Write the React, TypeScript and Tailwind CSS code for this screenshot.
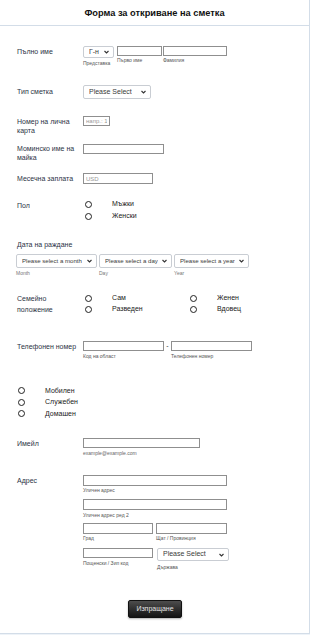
import React from 'react';

const font = { fontFamily: '"Liberation Sans", Arial, sans-serif' };

function Chevron() {
  return (
    <svg width="5" height="4" viewBox="0 0 10 7" className="shrink-0">
      <path d="M1 1.5 L5 5.5 L9 1.5" fill="none" stroke="#333" strokeWidth="2.2" />
    </svg>
  );
}

function FakeSelect({ text, className }: { text: string; className: string }) {
  return (
    <div
      className={`flex items-center justify-between bg-white border border-[#c9cdd3] rounded-[2px] pl-[5px] pr-[4px] text-[#3a3a3a] ${className}`}
    >
      <span className="truncate">{text}</span>
      <Chevron />
    </div>
  );
}

function TextBox({ className, placeholder }: { className: string; placeholder?: string }) {
  return (
    <input
      placeholder={placeholder}
      className={`block bg-white border border-[#8f8f8f] px-[2px] text-[6px] text-[#333] placeholder:text-[#999] outline-none ${className}`}
    />
  );
}

function Radio() {
  return <span className="block w-[7px] h-[7px] rounded-full border-[1.3px] border-[#222] bg-white shrink-0" />;
}

function Sub({ children, className = '' }: { children: React.ReactNode; className?: string }) {
  return <div className={`text-[5px] leading-[7px] text-[#555] whitespace-nowrap ${className}`}>{children}</div>;
}

function Label({ children, className = '' }: { children: React.ReactNode; className?: string }) {
  return <div className={`w-[66px] shrink-0 text-[7px] leading-[9px] text-[#2c3345] ${className}`}>{children}</div>;
}

function RadioItem({ text, gap }: { text: string; gap: string }) {
  return (
    <div className={`flex items-center h-full ${gap}`}>
      <Radio />
      <span className="text-[7px] text-[#222]">{text}</span>
    </div>
  );
}

export default function App() {
  return (
    <div className="min-h-screen bg-[#eef3f8]" style={font}>
      <div className="w-[310px] h-[634px] bg-white border-r border-b border-[#d3dde8]">
        <div className="h-[26px] border-b border-[#d3dde8] flex items-center justify-center">
          <h1 className="text-[9.25px] font-bold text-[#111] mt-[2px]">Форма за откриване на сметка</h1>
        </div>

        <div className="pt-[18px] pl-[17px]">
          {/* Full name */}
          <div className="h-[39px] flex pt-[2px]">
            <Label className="pt-[1px]">Пълно име</Label>
            <div className="flex items-start">
              <div className="flex flex-col w-[31px] mr-[3px]">
                <FakeSelect text="Г-н" className="h-[12px] w-[31px] text-[7px]" />
                <Sub className="mt-[2px]">Представка</Sub>
              </div>
              <div className="flex flex-col mr-[1px]">
                <TextBox className="h-[10px] w-[45px]" />
                <Sub className="mt-[1px]">Първо име</Sub>
              </div>
              <div className="flex flex-col">
                <TextBox className="h-[10px] w-[64px]" />
                <Sub className="mt-[1px]">Фамилия</Sub>
              </div>
            </div>
          </div>

          {/* Account type */}
          <div className="h-[31px] flex items-start pt-[2px]">
            <Label className="pt-[2px]">Тип сметка</Label>
            <FakeSelect text="Please Select" className="h-[14px] w-[68px] text-[7px]" />
          </div>

          {/* ID */}
          <div className="h-[28px] flex items-start pt-[2px]">
            <Label className="leading-[8px] pt-[1px]">Номер на лична карта</Label>
            <TextBox className="h-[10px] w-[27px]" placeholder="напр.: 1234" />
          </div>

          {/* Mother's maiden name */}
          <div className="h-[29px] flex items-start pt-[2px]">
            <Label>Моминско име на майка</Label>
            <TextBox className="h-[10px] w-[81px]" />
          </div>

          {/* Salary */}
          <div className="h-[27px] flex items-start pt-[2px]">
            <Label className="pt-[1px]">Месечна заплата</Label>
            <TextBox className="h-[11px] w-[70px]" placeholder="USD" />
          </div>

          {/* Gender */}
          <div className="h-[42px] flex items-start">
            <Label className="pt-[3px]">Пол</Label>
            <div className="flex flex-col pl-[2px]">
              <div className="h-[12px]"><RadioItem text="Мъжки" gap="gap-[20px]" /></div>
              <div className="h-[12px]"><RadioItem text="Женски" gap="gap-[20px]" /></div>
            </div>
          </div>

          {/* Birth date */}
          <div className="h-[10px] text-[7px] leading-[10px] text-[#2c3345]">Дата на раждане</div>
          <div className="h-[42px] flex items-start pt-[4px] -ml-[1px]">
            <div className="flex flex-col mr-[2px]">
              <FakeSelect text="Please select a month" className="h-[14px] w-[81px] text-[6.1px]" />
              <Sub className="mt-[2px] text-[#777]">Month</Sub>
            </div>
            <div className="flex flex-col mr-[2px]">
              <FakeSelect text="Please select a day" className="h-[14px] w-[73px] text-[6.1px]" />
              <Sub className="mt-[2px] text-[#777]">Day</Sub>
            </div>
            <div className="flex flex-col">
              <FakeSelect text="Please select a year" className="h-[14px] w-[75px] text-[6.1px]" />
              <Sub className="mt-[2px] text-[#777]">Year</Sub>
            </div>
          </div>

          {/* Marital status */}
          <div className="h-[44px] flex items-start pt-[1px]">
            <Label className="leading-[11px]">Семейно положение</Label>
            <div className="grid grid-cols-[105px_auto] content-start pl-[2px]">
              <div className="h-[11px]"><RadioItem text="Сам" gap="gap-[20px]" /></div>
              <div className="h-[11px]"><RadioItem text="Женен" gap="gap-[20px]" /></div>
              <div className="h-[11px]"><RadioItem text="Разведен" gap="gap-[20px]" /></div>
              <div className="h-[11px]"><RadioItem text="Вдовец" gap="gap-[20px]" /></div>
            </div>
          </div>

          {/* Phone */}
          <div className="h-[46px] flex items-start pt-[5px]">
            <Label className="pt-[1px]">Телефонен номер</Label>
            <div className="flex">
              <div className="flex flex-col">
                <TextBox className="h-[10px] w-[81px]" />
                <Sub className="mt-[2px]">Код на област</Sub>
              </div>
              <span className="w-[7px] text-center text-[7px] leading-[10px] text-[#333]">-</span>
              <div className="flex flex-col">
                <TextBox className="h-[10px] w-[81px]" />
                <Sub className="mt-[2px]">Телефонен номер</Sub>
              </div>
            </div>
          </div>

          {/* Phone type */}
          <div className="h-[50px] flex flex-col pt-[3px] pl-[1px]">
            <div className="h-[11.5px]"><RadioItem text="Мобилен" gap="gap-[20px]" /></div>
            <div className="h-[11.5px]"><RadioItem text="Служебен" gap="gap-[20px]" /></div>
            <div className="h-[11.5px]"><RadioItem text="Домашен" gap="gap-[20px]" /></div>
          </div>

          {/* Email */}
          <div className="h-[38px] flex items-start pt-[6px]">
            <Label className="pt-[1px]">Имейл</Label>
            <div className="flex flex-col">
              <TextBox className="h-[10px] w-[117px]" />
              <Sub className="mt-[2px] text-[5.5px] text-[#666]">example@example.com</Sub>
            </div>
          </div>

          {/* Address */}
          <div className="h-[125px] flex items-start pt-[5px]">
            <Label className="pt-[1px]">Адрес</Label>
            <div className="flex flex-col">
              <TextBox className="h-[11px] w-[144px]" />
              <Sub className="mt-[1px]">Уличен адрес</Sub>
              <TextBox className="h-[11px] w-[144px] mt-[5px]" />
              <Sub className="mt-[2px]">Уличен адрес ред 2</Sub>
              <div className="flex items-start gap-[3px] mt-[4px]">
                <div className="flex flex-col">
                  <TextBox className="h-[11px] w-[70px]" />
                  <Sub className="mt-[1px]">Град</Sub>
                </div>
                <div className="flex flex-col">
                  <TextBox className="h-[11px] w-[71px]" />
                  <Sub className="mt-[1px]">Щат / Провинция</Sub>
                </div>
              </div>
              <div className="flex items-start gap-[4px] mt-[6px]">
                <div className="flex flex-col">
                  <TextBox className="h-[10px] w-[70px]" />
                  <Sub className="mt-[2px]">Пощенски / Зип код</Sub>
                </div>
                <div className="flex flex-col">
                  <FakeSelect text="Please Select" className="h-[13px] w-[72px] text-[7px]" />
                  <Sub className="mt-[3px]">Държава</Sub>
                </div>
              </div>
            </div>
          </div>

          {/* Submit */}
          <div className="flex pl-[111px] pt-[5px]">
            <button className="w-[54px] h-[18px] rounded-[2px] border border-[#111] bg-gradient-to-b from-[#4d4d4d] to-[#141414] text-[7px] text-[#e6e6e6] shadow-[0_1px_2px_rgba(0,0,0,0.3)]">
              Изпращане
            </button>
          </div>
        </div>
      </div>
    </div>
  );
}
